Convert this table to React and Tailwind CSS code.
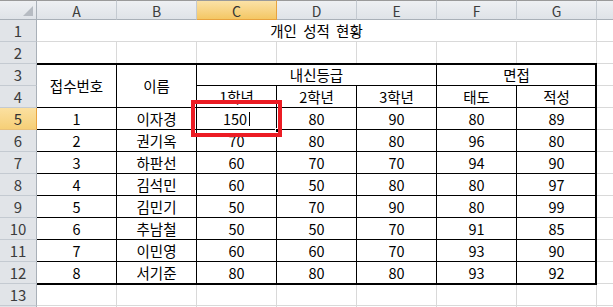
import React from 'react';

const COL = ['', 'col-start-1', 'col-start-2', 'col-start-3', 'col-start-4', 'col-start-5', 'col-start-6', 'col-start-7', 'col-start-8', 'col-start-9'];
const ROW = ['', 'row-start-1', 'row-start-2', 'row-start-3', 'row-start-4', 'row-start-5', 'row-start-6', 'row-start-7', 'row-start-8', 'row-start-9', 'row-start-10', 'row-start-11', 'row-start-12', 'row-start-13', 'row-start-14', 'row-start-15'];

const letters = ['A', 'B', 'C', 'D', 'E', 'F', 'G'];

const students = [
  ['1', '이자경', '150', '80', '90', '80', '89'],
  ['2', '권기옥', '70', '80', '80', '96', '80'],
  ['3', '하판선', '60', '70', '70', '94', '90'],
  ['4', '김석민', '60', '50', '80', '80', '97'],
  ['5', '김민기', '50', '70', '90', '80', '99'],
  ['6', '추남철', '50', '50', '70', '91', '85'],
  ['7', '이민영', '60', '60', '70', '93', '90'],
  ['8', '서기준', '80', '80', '80', '93', '92'],
];

const grid = 'border-r border-b border-[#d9d9d9]';
const line = 'border-r border-b border-black';

const Cell = ({ c, r, className = '', children }) => (
  <div className={`${COL[c]} ${ROW[r]} flex items-center justify-center pt-px ${className}`}>{children}</div>
);

export default function App() {
  return (
    <div className="grid h-[307px] w-[613px] grid-cols-[37px_repeat(7,80px)_1fr] grid-rows-[20px_repeat(13,22px)_1fr] overflow-hidden bg-white font-['Noto_Sans_CJK_KR',sans-serif] text-[14.5px] text-black">
      {/* corner */}
      <div className="col-start-1 row-start-1 flex items-end justify-end border-t border-r border-b border-t-[#9a9a9a] border-r-[#a9b0b8] border-b-[#a9b0b8] bg-gradient-to-b from-[#eef0f3] to-[#dfe3e8] pr-[3px] pb-[3px]">
        <svg width="10" height="10" viewBox="0 0 10 10">
          <polygon points="10,0 10,10 0,10" fill="#b6bbc2" />
        </svg>
      </div>

      {/* column headers */}
      {letters.map((l, i) => (
        <div
          key={l}
          className={`${COL[i + 2]} row-start-1 flex items-center justify-center border-t border-r border-b pt-[2px] text-[14px] ${
            l === 'C'
              ? 'border-t-[#9a9a9a] border-r-[#e8a33f] border-b-[#e8a33f] bg-gradient-to-b from-[#fbe2a6] to-[#f4c763] text-[#333]'
              : 'border-t-[#9a9a9a] border-r-[#c4cad1] border-b-[#a9b0b8] bg-gradient-to-b from-[#eef0f3] to-[#dfe3e8] text-[#3c3c3c]'
          }`}
        >
          {l}
        </div>
      ))}
      <div className="col-start-9 row-start-1 border-t border-b border-t-[#9a9a9a] border-b-[#a9b0b8] bg-gradient-to-b from-[#eef0f3] to-[#dfe3e8]" />

      {/* row headers */}
      {Array.from({ length: 14 }, (_, i) => (
        <div
          key={i}
          className={`col-start-1 ${ROW[i + 2]} flex items-center justify-center border-r border-b pt-px text-[15px] ${
            i === 4
              ? 'border-r-[#e8a33f] border-b-[#e8c07a] bg-gradient-to-b from-[#fbe0a0] to-[#f6cf77] text-[#333]'
              : 'border-r-[#a9b0b8] border-b-[#c4cad1] bg-[#e1e4e8] text-[#3c3c3c]'
          }`}
        >
          {i < 13 ? i + 1 : ''}
        </div>
      ))}

      {/* row 1 title */}
      <Cell c={2} r={2} className={`col-span-7 [word-spacing:3px] ${grid}`}>개인 성적 현황</Cell>
      {/* row 2 and row 13 blanks */}
      {[3, 14, 15].map((r) =>
        [2, 3, 4, 5, 6, 7, 8].map((c) => <Cell key={`${r}-${c}`} c={c} r={r} className={grid} />)
      )}
      {/* column H */}
      {Array.from({ length: 14 }, (_, i) => (
        <Cell key={`h${i}`} c={9} r={i + 2} className="border-b border-[#d9d9d9]" />
      ))}

      {/* table header */}
      <Cell c={2} r={4} className={`row-span-2 ${line}`}>접수번호</Cell>
      <Cell c={3} r={4} className={`row-span-2 ${line}`}>이름</Cell>
      <Cell c={4} r={4} className={`col-span-3 ${line}`}>내신등급</Cell>
      <Cell c={7} r={4} className={`col-span-2 ${line}`}>면접</Cell>
      {['1학년', '2학년', '3학년', '태도', '적성'].map((t, i) => (
        <Cell key={t} c={i + 4} r={5} className={line}>{t}</Cell>
      ))}

      {/* table body */}
      {students.map((row, ri) =>
        row.map((v, ci) => (
          <Cell key={`${ri}-${ci}`} c={ci + 2} r={ri + 6} className={line}>
            {ri === 0 && ci === 2 ? (
              <span className="flex items-center">
                {v}
                <span className="ml-[2px] h-[14px] w-px bg-black" />
              </span>
            ) : (
              v
            )}
          </Cell>
        ))
      )}

      {/* thick outer border of the table */}
      <div className="pointer-events-none z-10 col-span-7 col-start-2 row-span-10 row-start-4 -mt-px -mb-px border-t-2 border-r-2 border-b-2 border-black" />

      {/* fill handle on C5 */}
      <div className="z-20 col-start-4 row-start-6 -mb-[3px] -mr-[3px] flex items-end justify-end">
        <div className="h-[5px] w-[5px] border border-white bg-black" />
      </div>

      {/* red annotation box */}
      <div className="pointer-events-none z-30 col-start-4 row-start-6 -mt-[8px] -mr-[5px] -mb-[7px] -ml-[6px] border-4 border-[#ec1c24]" />
    </div>
  );
}
